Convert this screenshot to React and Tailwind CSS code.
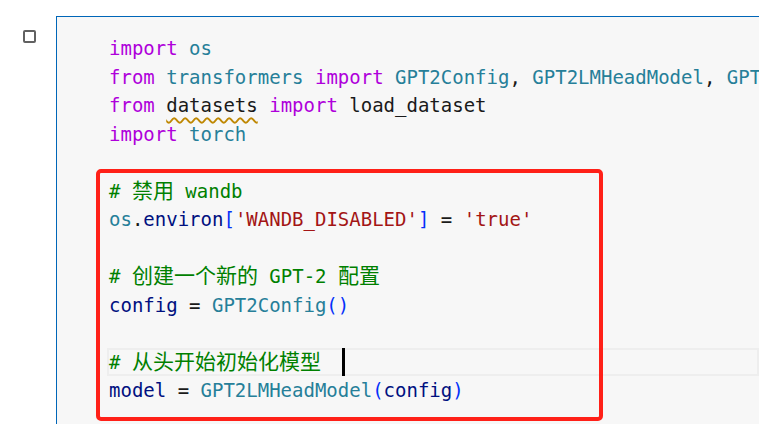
import React from "react";

const K = ({ children }) => <span className="text-[#af00db]">{children}</span>;
const M = ({ children }) => <span className="text-[#267f99]">{children}</span>;
const V = ({ children }) => <span className="text-[#001080]">{children}</span>;
const S = ({ children }) => <span className="text-[#a31515]">{children}</span>;
const B = ({ children }) => <span className="text-[#0431fa]">{children}</span>;
const C = ({ children }) => <span className="text-[#008000]">{children}</span>;
const H = ({ children }) => (
  <span className="text-[21px] leading-none" style={{ fontFamily: '"Noto Sans CJK SC", sans-serif' }}>
    {children}
  </span>
);

function Line({ children, current }) {
  return (
    <div
      className={
        "relative h-[28.5px] leading-[28.5px] whitespace-pre -ml-[2px] pl-[2px] " +
        (current ? "shadow-[inset_0_0_0_2px_#eeeeee]" : "")
      }
    >
      {children}
      {current && <span className="absolute left-[235px] top-0 h-[28px] w-[3px] bg-black" />}
    </div>
  );
}

export default function App() {
  return (
    <div className="relative w-[759px] h-[424px] overflow-hidden bg-white">
      <div className="flex">
        <div className="w-[56px] shrink-0 pt-[30px] pl-[23px]">
          <div className="w-[13px] h-[13px] border-2 border-[#616161] rounded-[2px]" />
        </div>
        <div className="mt-[16px] flex-1 min-w-0 overflow-hidden h-[420px] border-l border-t border-[#0066b8] bg-[#f7f7f7] pt-[17px] pl-[52px]">
          <div
            className="text-[19px] text-[#1a1a1a]"
            style={{ fontFamily: '"DejaVu Sans Mono", "Noto Sans CJK SC", monospace' }}
          >
            <Line>
              <K>import</K> <M>os</M>
            </Line>
            <Line>
              <K>from</K> <M>transformers</M> <K>import</K> <M>GPT2Config</M>, <M>GPT2LMHeadModel</M>, <M>GPT</M>
            </Line>
            <Line>
              <K>from</K>{" "}
              <span className="underline decoration-wavy decoration-[#bf8803] decoration-[1.5px] underline-offset-[5px]">datasets</span>{" "}
              <K>import</K> load_dataset
            </Line>
            <Line>
              <K>import</K> <M>torch</M>
            </Line>
            <Line> </Line>
            <Line>
              <C>
                # <H>禁用</H> wandb
              </C>
            </Line>
            <Line>
              <M>os</M>.<V>environ</V>
              <B>[</B>
              <S>'WANDB_DISABLED'</S>
              <B>]</B> = <S>'true'</S>
            </Line>
            <Line> </Line>
            <Line>
              <C>
                # <H>创建一个新的</H> GPT-2 <H>配置</H>
              </C>
            </Line>
            <Line>
              <V>config</V> = <M>GPT2Config</M>
              <B>()</B>
            </Line>
            <Line> </Line>
            <Line current>
              <C>
                # <H>从头开始初始化模型</H>
              </C>
            </Line>
            <Line>
              <V>model</V> = <M>GPT2LMHeadModel</M>
              <B>(</B>
              <V>config</V>
              <B>)</B>
            </Line>
          </div>
        </div>
      </div>
      <div className="absolute left-[96px] top-[169px] w-[507px] h-[252px] border-4 border-[#ff2018] rounded-[5px] pointer-events-none" />
    </div>
  );
}
